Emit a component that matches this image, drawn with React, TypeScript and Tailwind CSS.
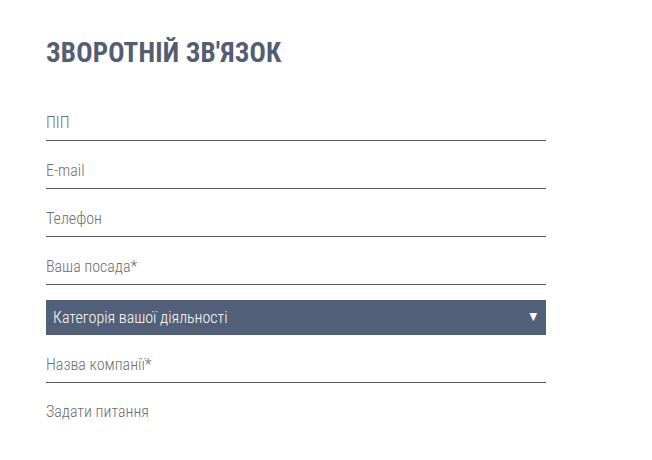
import React from "react";

const fields = ["ПІП", "E-mail", "Телефон", "Ваша посада*"];

const Field = ({ label }: { label: string }) => (
  <div className="h-[48px] flex items-end border-b border-[#5a5a5a] pb-[7px]">
    <span className="text-[16px] leading-[20px] font-light text-[#6e6e6e]">{label}</span>
  </div>
);

const App = () => {
  return (
    <div
      className="w-[652px] h-[460px] bg-white overflow-hidden pl-[46px] pt-[37px]"
      style={{ fontFamily: '"Roboto Condensed", "DejaVu Sans Condensed", Roboto, sans-serif' }}
    >
      <h1 className="text-[27px] leading-[32px] font-bold text-[#535e72] tracking-[0.2px]">ЗВОРОТНІЙ ЗВ'ЯЗОК</h1>
      <form className="w-[500px] mt-[24px]">
        {fields.map((f) => (
          <Field key={f} label={f} />
        ))}
        <div className="mt-[15px] h-[35px] bg-[#536079] flex items-center justify-between pl-[7px] pr-[9px]">
          <span className="text-[16px] font-light text-white">Категорія вашої діяльності</span>
          <span className="text-[11px] text-white">▼</span>
        </div>
        <Field label="Назва компанії*" />
        <div className="pt-[17px]">
          <span className="text-[16px] leading-[20px] font-light text-[#6e6e6e]">Задати питання</span>
        </div>
      </form>
    </div>
  );
};

export default App;
